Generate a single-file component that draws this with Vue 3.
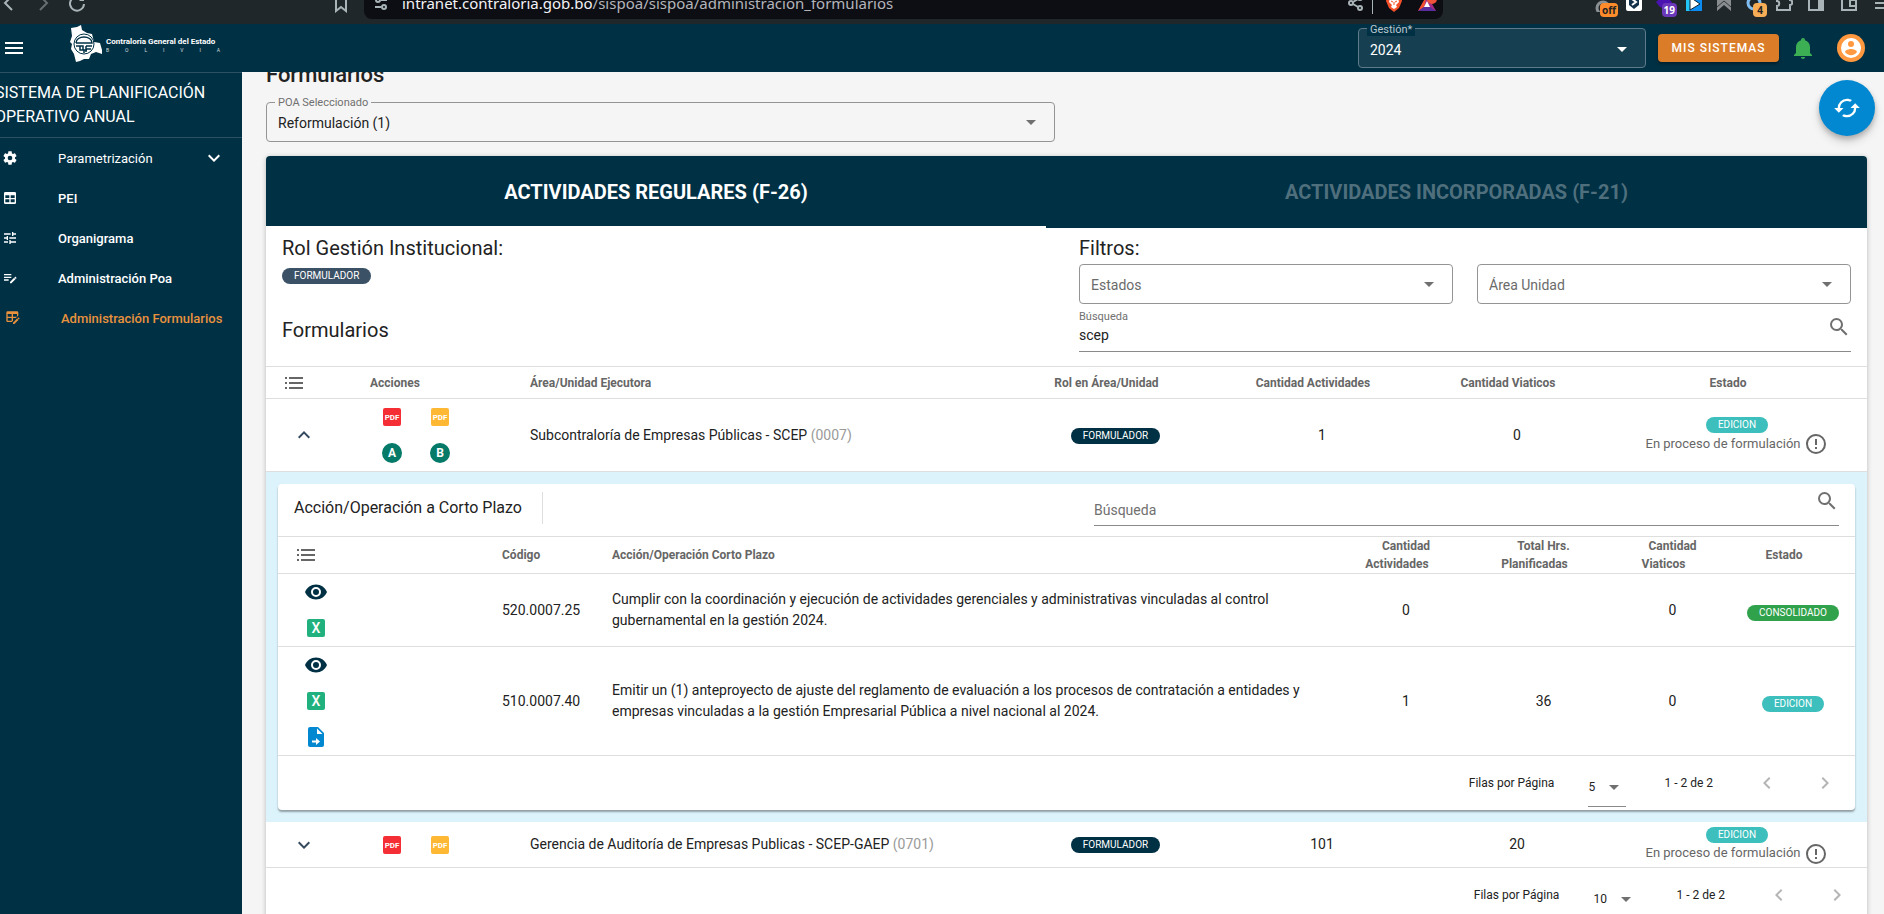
<script setup>
import { ref } from 'vue'

const icons = {
  cog: 'M12,15.5A3.5,3.5 0 0,1 8.5,12A3.5,3.5 0 0,1 12,8.5A3.5,3.5 0 0,1 15.5,12A3.5,3.5 0 0,1 12,15.5M19.43,12.97C19.47,12.65 19.5,12.33 19.5,12C19.5,11.67 19.47,11.34 19.43,11L21.54,9.37C21.73,9.22 21.78,8.95 21.66,8.73L19.66,5.27C19.54,5.05 19.27,4.96 19.05,5.05L16.56,6.05C16.04,5.66 15.5,5.32 14.87,5.07L14.5,2.42C14.46,2.18 14.25,2 14,2H10C9.75,2 9.54,2.18 9.5,2.42L9.13,5.07C8.5,5.32 7.96,5.66 7.44,6.05L4.95,5.05C4.73,4.96 4.46,5.05 4.34,5.27L2.34,8.73C2.21,8.95 2.27,9.22 2.46,9.37L4.57,11C4.53,11.34 4.5,11.67 4.5,12C4.5,12.33 4.53,12.65 4.57,12.97L2.46,14.63C2.27,14.78 2.21,15.05 2.34,15.27L4.34,18.73C4.46,18.95 4.73,19.03 4.95,18.95L7.44,17.94C7.96,18.34 8.5,18.68 9.13,18.93L9.5,21.58C9.54,21.82 9.75,22 10,22H14C14.25,22 14.46,21.82 14.5,21.58L14.87,18.93C15.5,18.67 16.04,18.34 16.56,17.94L19.05,18.95C19.27,19.03 19.54,18.95 19.66,18.73L21.66,15.27C21.78,15.05 21.73,14.78 21.54,14.63L19.43,12.97Z',
  table: 'M5,3H19A2,2 0 0,1 21,5V19A2,2 0 0,1 19,21H5A2,2 0 0,1 3,19V5A2,2 0 0,1 5,3M5,8V12H11V8H5M13,8V12H19V8H13M5,14V18.5H11V14H5M13,14V18.5H19V14H13Z',
  tune: 'M3,17V19H9V17H3M3,5V7H13V5H3M13,21V19H21V17H13V15H11V21H13M7,9V11H3V13H7V15H9V9H7M21,13V11H11V13H21M15,9H17V7H21V5H17V3H15V9Z',
  playlist: 'M3 6V8H14V6H3M3 10V12H14V10H3M20 10.1C19.9 10.1 19.7 10.2 19.6 10.3L18.6 11.3L20.7 13.4L21.7 12.4C21.9 12.2 21.9 11.8 21.7 11.6L20.4 10.3C20.3 10.2 20.2 10.1 20 10.1M18.1 11.8L12 17.9V20H14.1L20.2 13.9L18.1 11.8M3 14V16H10V14H3Z',
  tableEdit: 'M21.7,13.35L20.7,14.35L18.65,12.3L19.65,11.3C19.86,11.08 20.21,11.08 20.42,11.3L21.7,12.58C21.92,12.79 21.92,13.14 21.7,13.35M12,18.94L18.07,12.88L20.12,14.93L14.06,21H12V18.94M4,2H18A2,2 0 0,1 20,4V8.17L16.17,12H12V16.17L10.17,18H4A2,2 0 0,1 2,16V4A2,2 0 0,1 4,2M4,6V10H10V6H4M12,6V10H18V6H12M4,12V16H10V12H4Z',
  down: 'M7.41,8.58L12,13.17L16.59,8.58L18,10L12,16L6,10L7.41,8.58Z',
  up: 'M7.41,15.41L12,10.83L16.59,15.41L18,14L12,8L6,14L7.41,15.41Z',
  left: 'M15.41,16.58L10.83,12L15.41,7.41L14,6L8,12L14,18L15.41,16.58Z',
  right: 'M8.59,16.58L13.17,12L8.59,7.41L10,6L16,12L10,18L8.59,16.58Z',
  eye: 'M12,9A3,3 0 0,0 9,12A3,3 0 0,0 12,15A3,3 0 0,0 15,12A3,3 0 0,0 12,9M12,17A5,5 0 0,1 7,12A5,5 0 0,1 12,7A5,5 0 0,1 17,12A5,5 0 0,1 12,17M12,4.5C7,4.5 2.73,7.61 1,12C2.73,16.39 7,19.5 12,19.5C17,19.5 21.27,16.39 23,12C21.27,7.61 17,4.5 12,4.5Z',
  search: 'M9.5,3A6.5,6.5 0 0,1 16,9.5C16,11.11 15.41,12.59 14.44,13.73L14.71,14H15.5L20.5,19L19,20.5L14,15.5V14.71L13.73,14.44C12.59,15.41 11.11,16 9.5,16A6.5,6.5 0 0,1 3,9.5A6.5,6.5 0 0,1 9.5,3M9.5,5C7,5 5,7 5,9.5C5,12 7,14 9.5,14C12,14 14,12 14,9.5C14,7 12,5 9.5,5Z',
  alert: 'M11,15H13V17H11V15M11,7H13V13H11V7M12,2C6.47,2 2,6.5 2,12A10,10 0 0,0 12,22A10,10 0 0,0 22,12A10,10 0 0,0 12,2M12,20A8,8 0 0,1 4,12A8,8 0 0,1 12,4A8,8 0 0,1 20,12A8,8 0 0,1 12,20Z',
  bell: 'M21,19V20H3V19L5,17V11C5,7.9 7.03,5.17 10,4.29V4A2,2 0 0,1 14,4V4.29C16.97,5.17 19,7.9 19,11V17L21,19M14,21A2,2 0 0,1 10,21Z',
  account: 'M12,19.2C9.5,19.2 7.29,17.92 6,16C6.03,14 10,12.9 12,12.9C14,12.9 17.97,14 18,16C16.71,17.92 14.5,19.2 12,19.2M12,5A3,3 0 0,1 15,8A3,3 0 0,1 12,11A3,3 0 0,1 9,8A3,3 0 0,1 12,5M12,2A10,10 0 0,0 2,12A10,10 0 0,0 12,22A10,10 0 0,0 22,12C22,6.47 17.5,2 12,2Z',
  cached: 'M19,8L15,12H18A6,6 0 0,1 12,18C11,18 10.03,17.75 9.2,17.3L7.74,18.76C8.97,19.54 10.43,20 12,20A8,8 0 0,0 20,12H23M6,12A6,6 0 0,1 12,6C13,6 13.97,6.25 14.8,6.7L16.26,5.24C15.03,4.46 13.57,4 12,4A8,8 0 0,0 4,12H1L5,16L9,12',
  list: 'M3,6H5V8H3V6M7,6H21V8H7V6M3,11H5V13H3V11M7,11H21V13H7V11M3,16H5V18H3V16M7,16H21V18H7V16Z',
  menu: 'M3,6H21V8H3V6M3,11H21V13H3V11M3,16H21V18H3V16Z',
  fileMove: 'M14,2H6A2,2 0 0,0 4,4V20A2,2 0 0,0 6,22H18A2,2 0 0,0 20,20V8L14,2M13,3.5L18.5,9H13V3.5M12,20V17.5H8V15.5H12V13L16,16.5L12,20Z',
}

const nav = [
  { label: 'Parametrización', icon: 'cog', group: true },
  { label: 'PEI', icon: 'table' },
  { label: 'Organigrama', icon: 'tune' },
  { label: 'Administración Poa', icon: 'playlist' },
  { label: 'Administración Formularios', icon: 'tableEdit', active: true },
]

const busqueda = ref('scep')
const busquedaAccion = ref('')

const unidades = [
  { nombre: 'Subcontraloría de Empresas Públicas - SCEP', codigo: '(0007)', actividades: 1, viaticos: 0, abierto: true },
  { nombre: 'Gerencia de Auditoría de Empresas Publicas - SCEP-GAEP', codigo: '(0701)', actividades: 101, viaticos: 20, abierto: false },
]

const acciones = [
  {
    codigo: '520.0007.25',
    texto: 'Cumplir con la coordinación y ejecución de actividades gerenciales y administrativas vinculadas al control gubernamental en la gestión 2024.',
    actividades: '0', horas: '', viaticos: '0', estado: 'CONSOLIDADO', mover: false,
  },
  {
    codigo: '510.0007.40',
    texto: 'Emitir un (1) anteproyecto de ajuste del reglamento de evaluación a los procesos de contratación a entidades y empresas vinculadas a la gestión Empresarial Pública a nivel nacional al 2024.',
    actividades: '1', horas: '36', viaticos: '0', estado: 'EDICION', mover: true,
  },
]
</script>

<template>
  <div class="shell">
    <div class="browser">
      <div class="browser-row">
        <div class="nav-buttons">
          <button type="button" aria-label="Atrás"><svg width="18" height="18" viewBox="0 0 18 18"><path d="M12 2L5 9L12 16" class="line" /></svg></button>
          <button type="button" aria-label="Adelante" class="dim"><svg width="18" height="18" viewBox="0 0 18 18"><path d="M6 2L13 9L6 16" class="line" /></svg></button>
          <button type="button" aria-label="Recargar"><svg width="18" height="18" viewBox="0 0 18 18"><path d="M15 6A7 7 0 1 0 16 10" class="line" /><path d="M16 2V7H11Z" fill="#a9b4b8" /></svg></button>
        </div>
        <button type="button" class="bookmark" aria-label="Marcador"><svg width="14" height="20" viewBox="0 0 14 20"><path d="M2 2H12V18L7 14L2 18Z" class="line" /></svg></button>
        <div class="url">
          <svg width="14" height="18" viewBox="0 0 14 18"><g class="line"><circle cx="4" cy="6" r="2" /><path d="M7 6H13M1 13H7" /><circle cx="10" cy="13" r="2" /></g></svg>
          <span class="address">intranet.contraloria.gob.bo<span>/sispoa/sispoa/administracion_formularios</span></span>
          <svg width="16" height="18" viewBox="0 0 16 18"><g class="line"><circle cx="3" cy="9" r="2" /><circle cx="12" cy="4" r="2" /><circle cx="12" cy="14" r="2" /><path d="M5 8L10 5M5 10L10 13" /></g></svg>
          <i class="url-rule"></i>
          <svg width="18" height="20" viewBox="0 0 18 20"><path d="M9 0L16 3L17 8L14 15L9 19L4 15L1 8L2 3Z" fill="#f4502a" /><path d="M9 5L13 5L14 9L11 12L12 14L9 16L6 14L7 12L4 9L5 5Z" fill="#fff" /><path d="M6 8L8 9M12 8L10 9M9 9V12" stroke="#f4502a" /></svg>
          <svg class="bat" width="22" height="20" viewBox="0 0 22 20"><path d="M11 2L20 18H2Z" fill="#a12b86" /><path d="M11 2L2 18L8 14Z" fill="#f4502a" /><path d="M2 18H20L14 14H8Z" fill="#5a2d9c" /><path d="M11 8L14 14H8Z" fill="#fff" /><circle cx="16" cy="6" r="5" fill="#f0533a" /></svg>
        </div>
        <div class="extensions">
          <button type="button" aria-label="Extensión desactivada"><svg width="18" height="18" viewBox="0 0 18 18"><circle cx="8" cy="14" r="6" fill="none" stroke="#8b9093" stroke-width="3" /></svg><b class="badge off">off</b></button>
          <button type="button" aria-label="Escudo"><svg width="18" height="18" viewBox="0 0 18 18"><rect x="1" y="1" width="16" height="16" rx="2" fill="#fff" /><path d="M4 3H14V11L9 15L4 11Z" fill="#12304a" /><path d="M7 5L11 8L7 11" fill="none" stroke="#fff" stroke-width="2" /></svg></button>
          <button type="button" aria-label="Extensión con 19 avisos"><svg width="18" height="18" viewBox="0 0 18 18"><path d="M9 1L17 8L13 16L5 13L1 8Z" fill="#4a12b0" /></svg><b class="badge violet">19</b></button>
          <button type="button" aria-label="Reproductor"><svg width="18" height="18" viewBox="0 0 18 18"><rect x="1" y="1" width="16" height="16" fill="#0a8cf0" /><path d="M1 1H8L4 17H1Z" fill="#22c3f5" /><path d="M5 3L15 10L5 16Z" fill="#fff" stroke="#10202c" /></svg></button>
          <button type="button" aria-label="Notas"><svg width="18" height="18" viewBox="0 0 18 18"><path d="M2 2H16V17L9 11L2 17Z" fill="#8a8d8f" /><path d="M2 13L9 7L16 13" fill="none" stroke="#30373a" stroke-width="1" /></svg></button>
          <button type="button" aria-label="Extensión con 4 avisos"><svg width="18" height="18" viewBox="0 0 18 18"><circle cx="9" cy="9" r="6" fill="none" stroke="#7fbdf0" stroke-width="3" /></svg><b class="badge sand">4</b></button>
          <button type="button" aria-label="Extensiones"><svg width="18" height="18" viewBox="0 0 18 18"><path d="M2 2H15V6C18 6 18 11 15 11V16H2V12C5 12 5 7 2 7Z" class="line" /></svg></button>
          <button type="button" class="wide" aria-label="Panel lateral"><svg width="18" height="18" viewBox="0 0 18 18"><path d="M2 1H16V16H2Z" class="line" /><path d="M11 1H16V16H11Z" fill="#a9b4b8" /></svg></button>
          <button type="button" class="wide" aria-label="Cartera"><svg width="18" height="18" viewBox="0 0 18 18"><path d="M16 6V2H2V16H16V12M16 6H10V12H16Z" class="line" /></svg></button>
          <button type="button" class="wide" aria-label="Menú del navegador"><svg width="18" height="18" viewBox="0 0 18 18"><path d="M2 4H16M2 9H16M2 14H16" class="line" /></svg></button>
        </div>
      </div>
    </div>

    <header class="topbar">
      <button type="button" class="icon-btn" aria-label="Menú"><svg class="i24" viewBox="0 0 24 24"><path :d="icons.menu" /></svg></button>
      <a href="#" class="brand">
        <svg width="34" height="38" viewBox="0 0 34 38">
          <path d="M2 3L8 2L12 0L13 5L18 8L23 9L25 17L31 18L33 25L33 29L27 27L22 29L20 34L15 34L11 36L7 37L5 29L2 24L3 19L1 17L3 11Z" fill="#fff" />
          <circle cx="15" cy="19" r="10" fill="#fff" stroke="#003044" stroke-width="1" />
          <path d="M7 18C7 14 11 12 15 12C19 12 23 14 23 18H7M7 21H14V25H18M11 21V25H15V28M17 21H23M17 21V27M17 24H22" fill="none" stroke="#003044" stroke-width="1.5" />
        </svg>
        <span class="brand-text">
          <strong>Contraloría General del Estado</strong>
          <span class="brand-sub"><i v-for="(l, k) in 'BOLIVIA'.split('')" :key="k">{{ l }}</i></span>
        </span>
      </a>
      <div class="field dark gestion">
        <label for="gestion">Gestión*</label>
        <select id="gestion"><option>2024</option></select>
        <svg class="i24 arrow" viewBox="0 0 24 24"><path d="M7,10L12,15L17,10H7Z" /></svg>
      </div>
      <button type="button" class="systems">MIS SISTEMAS</button>
      <button type="button" class="icon-btn bell" aria-label="Notificaciones"><svg class="i24" viewBox="0 0 24 24"><path :d="icons.bell" /></svg></button>
      <button type="button" class="avatar" aria-label="Cuenta"><svg class="i24" viewBox="0 0 24 24"><path :d="icons.account" /></svg></button>
    </header>

    <div class="body">
      <aside class="sidebar">
        <div class="system-name">SISTEMA DE PLANIFICACIÓN OPERATIVO ANUAL</div>
        <nav>
          <a v-for="n in nav" :key="n.label" href="#" :class="{ active: n.active, group: n.group }">
            <svg class="i16" viewBox="0 0 24 24"><path :d="icons[n.icon]" fill-rule="evenodd" /></svg>
            <span>{{ n.label }}</span>
            <svg v-if="n.group" class="i24" viewBox="0 0 24 24"><path :d="icons.down" /></svg>
          </a>
        </nav>
      </aside>

      <main class="main">
        <h1>Formularios</h1>
        <div class="field poa">
          <label for="poa">POA Seleccionado</label>
          <select id="poa"><option>Reformulación (1)</option></select>
          <svg class="i24 arrow" viewBox="0 0 24 24"><path d="M7,10L12,15L17,10H7Z" /></svg>
        </div>

        <section class="card">
          <div class="tabs" role="tablist">
            <button type="button" role="tab" aria-selected="true" class="tab on">ACTIVIDADES REGULARES (F-26)</button>
            <button type="button" role="tab" aria-selected="false" class="tab">ACTIVIDADES INCORPORADAS (F-21)</button>
          </div>

          <div class="intro">
            <div class="role">
              <h2>Rol Gestión Institucional:</h2>
              <span class="chip slate">FORMULADOR</span>
              <h2 class="forms-title">Formularios</h2>
            </div>
            <div class="filters">
              <h2>Filtros:</h2>
              <div class="filter-row">
                <div class="field">
                  <select aria-label="Estados" class="muted"><option>Estados</option></select>
                  <svg class="i24 arrow" viewBox="0 0 24 24"><path d="M7,10L12,15L17,10H7Z" /></svg>
                </div>
                <div class="field">
                  <select aria-label="Área Unidad" class="muted"><option>Área Unidad</option></select>
                  <svg class="i24 arrow" viewBox="0 0 24 24"><path d="M7,10L12,15L17,10H7Z" /></svg>
                </div>
              </div>
              <div class="search">
                <div class="search-text">
                  <label for="busqueda">Búsqueda</label>
                  <input id="busqueda" v-model="busqueda" type="text" />
                </div>
                <svg class="i24" viewBox="0 0 24 24"><path :d="icons.search" /></svg>
              </div>
            </div>
          </div>

          <table class="outer">
            <colgroup>
              <col class="o-exp" /><col class="o-act" /><col /><col class="o-rol" /><col class="o-can" /><col class="o-via" /><col class="o-est" />
            </colgroup>
            <thead>
              <tr>
                <th class="l"><svg class="i24 list" viewBox="0 0 24 24"><path :d="icons.list" /></svg></th>
                <th class="l">Acciones</th>
                <th class="l">Área/Unidad Ejecutora</th>
                <th>Rol en Área/Unidad<i class="sort"></i></th>
                <th>Cantidad Actividades<i class="sort"></i></th>
                <th>Cantidad Viaticos<i class="sort"></i></th>
                <th>Estado<i class="sort"></i></th>
              </tr>
            </thead>
            <tbody>
              <template v-for="u in unidades" :key="u.codigo">
                <tr>
                  <td class="l">
                    <button type="button" class="act navy" :aria-label="u.abierto ? 'Contraer' : 'Expandir'"><svg class="i24" viewBox="0 0 24 24"><path :d="u.abierto ? icons.up : icons.down" /></svg></button>
                  </td>
                  <td class="l pair-cell">
                    <div class="pair">
                      <button type="button" class="act" aria-label="PDF rojo"><svg class="i24" viewBox="0 0 24 24"><rect x="3" y="3" width="18" height="18" rx="2" fill="#f52d35" /><text x="12" y="15" class="pdf">PDF</text></svg></button>
                      <button type="button" class="act" aria-label="PDF amarillo"><svg class="i24" viewBox="0 0 24 24"><rect x="3" y="3" width="18" height="18" rx="2" fill="#ffb833" /><text x="12" y="15" class="pdf">PDF</text></svg></button>
                      <template v-if="u.abierto">
                        <button type="button" class="act"><svg class="i24" viewBox="0 0 24 24"><circle cx="12" cy="12" r="10" fill="#057a69" /><text x="12" y="16" class="letter">A</text></svg></button>
                        <button type="button" class="act"><svg class="i24" viewBox="0 0 24 24"><circle cx="12" cy="12" r="10" fill="#057a69" /><text x="12" y="16" class="letter">B</text></svg></button>
                      </template>
                    </div>
                  </td>
                  <td class="l">{{ u.nombre }} <span class="code">{{ u.codigo }}</span></td>
                  <td><span class="chip navy-chip">FORMULADOR</span></td>
                  <td>{{ u.actividades }}</td>
                  <td>{{ u.viaticos }}</td>
                  <td>
                    <div class="state">
                      <span class="chip teal">EDICION</span>
                      <div class="state-note"><span>En proceso de formulación</span><svg class="i24" viewBox="0 0 24 24"><path :d="icons.alert" /></svg></div>
                    </div>
                  </td>
                </tr>
                <tr v-if="u.abierto" class="expanded">
                  <td colspan="7">
                    <div class="inner-card">
                      <div class="inner-bar">
                        <h3>Acción/Operación a Corto Plazo</h3>
                        <div class="search slim">
                          <input v-model="busquedaAccion" type="text" placeholder="Búsqueda" aria-label="Búsqueda de acción" />
                          <svg class="i24" viewBox="0 0 24 24"><path :d="icons.search" /></svg>
                        </div>
                      </div>
                      <table class="inner">
                        <colgroup>
                          <col class="n-act" /><col class="n-cod" /><col /><col class="n-can" /><col class="n-hrs" /><col class="n-via" /><col class="n-est" />
                        </colgroup>
                        <thead>
                          <tr>
                            <th class="l"><svg class="i24 list" viewBox="0 0 24 24"><path :d="icons.list" /></svg></th>
                            <th class="l">Código</th>
                            <th class="l">Acción/Operación Corto Plazo</th>
                            <th>Cantidad<br />Actividades<i class="sort"></i></th>
                            <th>Total Hrs.<br />Planificadas<i class="sort"></i></th>
                            <th>Cantidad<br />Viaticos<i class="sort"></i></th>
                            <th>Estado<i class="sort"></i></th>
                          </tr>
                        </thead>
                        <tbody>
                          <tr v-for="a in acciones" :key="a.codigo">
                            <td class="l">
                              <div class="stack">
                                <button type="button" class="act deep" aria-label="Ver"><svg class="i24" viewBox="0 0 24 24"><path :d="icons.eye" /></svg></button>
                                <button type="button" class="act"><svg class="i24" viewBox="0 0 24 24"><rect x="3" y="3" width="18" height="18" rx="2" fill="#21b17f" /><text x="12" y="17" class="excel">X</text></svg></button>
                                <button v-if="a.mover" type="button" class="act blue" aria-label="Mover"><svg class="i20" viewBox="2 2 20 20"><path :d="icons.fileMove" fill-rule="evenodd" /></svg></button>
                              </div>
                            </td>
                            <td class="l">{{ a.codigo }}</td>
                            <td class="l desc">{{ a.texto }}</td>
                            <td>{{ a.actividades }}</td>
                            <td>{{ a.horas }}</td>
                            <td>{{ a.viaticos }}</td>
                            <td class="chip-cell"><span class="chip" :class="a.estado === 'EDICION' ? 'teal' : 'green'">{{ a.estado }}</span></td>
                          </tr>
                        </tbody>
                      </table>
                      <div class="pager inner-pager">
                        <label for="filas-accion">Filas por Página</label>
                        <span class="rows"><select id="filas-accion"><option>5</option></select><svg class="i24" viewBox="0 0 24 24"><path d="M7,10L12,15L17,10H7Z" /></svg></span>
                        <span class="range">1 - 2 de 2</span>
                        <button type="button" disabled aria-label="Página anterior"><svg class="i24" viewBox="0 0 24 24"><path :d="icons.left" /></svg></button>
                        <button type="button" disabled aria-label="Página siguiente"><svg class="i24" viewBox="0 0 24 24"><path :d="icons.right" /></svg></button>
                      </div>
                    </div>
                  </td>
                </tr>
              </template>
            </tbody>
          </table>
          <div class="pager">
            <label for="filas">Filas por Página</label>
            <span class="rows ten"><select id="filas"><option>10</option></select><svg class="i24" viewBox="0 0 24 24"><path d="M7,10L12,15L17,10H7Z" /></svg></span>
            <span class="range">1 - 2 de 2</span>
            <button type="button" disabled aria-label="Página anterior"><svg class="i24" viewBox="0 0 24 24"><path :d="icons.left" /></svg></button>
            <button type="button" disabled aria-label="Página siguiente"><svg class="i24" viewBox="0 0 24 24"><path :d="icons.right" /></svg></button>
          </div>
        </section>
        <button type="button" class="fab" aria-label="Actualizar"><svg viewBox="0 0 24 24"><path :d="icons.cached" /></svg></button>
      </main>
    </div>
  </div>
</template>

<style>
body { margin: 0; overflow: hidden; }
</style>

<style scoped>
* { box-sizing: border-box; }
.shell { height: 100vh; display: flex; flex-direction: column; overflow: hidden; font-family: Roboto, "Liberation Sans", sans-serif; font-size: 14px; color: #222; background: #f5f5f5; }
button { font: inherit; color: inherit; background: none; border: 0; padding: 0; display: inline-flex; align-items: center; justify-content: center; }
select, input { font: inherit; color: inherit; background: none; border: 0; padding: 0; margin: 0; outline: 0; appearance: none; min-width: 0; opacity: 1; }
a { color: inherit; text-decoration: none; }
h1, h2, h3 { margin: 0; font-weight: 400; }
svg { fill: currentColor; display: block; flex: none; }
.i16 { width: 16px; height: 16px; }
.i20 { width: 20px; height: 20px; }
.i24 { width: 24px; height: 24px; }

.browser { height: 24px; flex: none; overflow: hidden; background: #20272a; color: #a9b4b8; }
.browser-row { height: 32px; margin-top: -13px; display: flex; align-items: center; }
.line { fill: none; stroke: #a9b4b8; stroke-width: 2; }
.nav-buttons { display: flex; gap: 16px; width: 332px; }
.nav-buttons .dim { opacity: .5; }
.bookmark { width: 18px; }
.url { flex: 1; height: 32px; margin: 0 146px 0 14px; padding: 0 5px 0 10px; display: flex; align-items: center; background: #0d0e14; border-radius: 8px; }
.address { flex: 1; margin-left: 14px; font-family: "Noto Sans", sans-serif; font-size: 15px; color: #f2f2f4; white-space: nowrap; }
.address span { color: #b4b5ba; }
.url-rule { width: 1px; height: 22px; margin: 0 12px 0 8px; background: #a9b4b8; }
.bat { margin-left: 13px; }
.extensions { display: flex; width: 295px; overflow: hidden; }
.extensions button { position: relative; flex: none; width: 30px; height: 32px; }
.extensions .wide { width: 33px; }
.badge { position: absolute; right: 2px; bottom: 2px; min-width: 14px; height: 14px; padding: 0 2px; border-radius: 4px; font: bold 10px/14px "Noto Sans", sans-serif; text-align: center; color: #222; }
.off { right: 1px; background: #ff8c2b; }
.violet { background: #6a38b8; color: #fff; }
.sand { background: #f6ad55; }

.topbar { height: 48px; flex: none; display: flex; align-items: center; background: #003044; color: #fff; padding: 0 19px 0 2px; }
.icon-btn { width: 24px; height: 24px; }
.brand { display: flex; align-items: center; margin-left: 43px; margin-top: -8px; }
.brand-text { display: flex; flex-direction: column; margin-left: 3px; width: 114px; }
.brand-text strong { font: bold 8px/12px Roboto, sans-serif; white-space: nowrap; }
.brand-sub { display: flex; justify-content: space-between; font-size: 5px; line-height: 4px; opacity: .8; }
.brand-sub i { font-style: normal; }
.gestion { width: 288px; margin-left: auto; }
.systems { width: 121px; height: 28px; margin-left: 12px; border-radius: 4px; background: #db7d28; font-size: 12px; font-weight: 500; letter-spacing: 1px; box-shadow: 0 2px 3px rgba(0, 0, 0, .35); }
.bell { margin-left: 12px; color: #3cae54; }
.avatar { width: 28px; height: 28px; margin-left: 22px; border-radius: 50%; background: #ff983f; }

.field { position: relative; height: 40px; border: 1px solid #949494; border-radius: 4px; display: flex; align-items: center; }
.field label { position: absolute; left: 8px; top: -7px; padding: 0 3px; font-size: 11px; line-height: 14px; color: #707070; background: #f5f5f5; }
.field select { flex: 1; height: 38px; padding: 1px 12px 0 11px; font-size: 14px; }
.field .muted { color: #6b6b6b; }
.field .arrow { position: absolute; right: 11px; top: 7px; color: #707070; pointer-events: none; }
.field.dark { border-color: #5d7a88; background: #173f52; }
.field.dark select { padding-top: 3px; }
.field.dark label { background: #003044; color: #b9c7ce; top: -5px; line-height: 12px; }
.field.dark .arrow { color: #fff; top: 8px; }

.body { flex: 1; min-height: 0; display: flex; }
.sidebar { width: 242px; flex: none; background: #003044; color: #fff; border-top: 1px solid #2d5164; overflow: hidden; }
.system-name { margin-left: -5px; padding: 8px 16px 8px 0; font-size: 16px; line-height: 24px; border-bottom: 1px solid #2d5164; }
.sidebar nav a { height: 40px; padding: 0 16px 0 2px; display: flex; align-items: center; font-size: 13px; font-weight: 500; }
.sidebar nav span { flex: 1; margin-left: 40px; white-space: nowrap; }
.sidebar nav .group { font-weight: 400; }
.sidebar nav .active { padding-left: 5px; padding-right: 0; color: #e9923e; }

.main { position: relative; flex: 1; min-width: 0; overflow: hidden; padding: 0 17px 0 24px; }
h1 { margin-top: -9px; font-size: 22px; line-height: 24px; font-weight: 500; }
.poa { width: 789px; margin-top: 15px; }
.fab { position: absolute; right: 9px; top: 8px; width: 56px; height: 56px; border-radius: 50%; background: #0288d1; color: #fff; box-shadow: 0 3px 5px rgba(0, 0, 0, .2), 0 6px 10px rgba(0, 0, 0, .14); }
.fab svg { width: 28px; height: 28px; }

.card { margin-top: 14px; border-radius: 4px; background: #fff; overflow: hidden; box-shadow: 0 1px 5px rgba(0, 0, 0, .25); }
.tabs { display: flex; height: 72px; background: #003044; }
.tab { flex: 821; font-size: 20px; font-weight: 700; color: #4f6f7d; }
.tab.on { flex: 780; color: #fff; border-bottom: 2px solid #fff; padding-top: 2px; }

.intro { display: flex; padding: 8px 16px 0; }
.role { flex: 797; }
.filters { flex: 772; }
h2 { font-size: 20px; line-height: 24px; }
.role .chip { margin-top: 8px; display: flex; width: max-content; }
.forms-title { margin-top: 34px; }
.filter-row { display: grid; grid-template-columns: 1fr 1fr; gap: 24px; margin-top: 4px; }
.search { display: flex; border-bottom: 1px solid #8a8a8a; color: #707070; height: 43px; margin: 5px 0 14px; }
.search-text { flex: 1; display: flex; flex-direction: column; }
.search label { font-size: 11px; line-height: 15px; }
.search input { height: 22px; font-size: 14px; color: #222; }
.search .i24 { margin-top: 6px; }
.chip { display: inline-flex; align-items: center; height: 16px; padding: 0 12px; border-radius: 8px; font-size: 10px; line-height: 16px; color: #fff; white-space: nowrap; vertical-align: middle; }
.slate { background: #3a5166; }
.navy-chip { background: #003044; }
.teal { background: #3cbfbd; }
.green { background: #31a24c; }

table { width: 100%; table-layout: fixed; border-collapse: separate; border-spacing: 0; }
th { font-size: 12px; line-height: 18px; font-weight: 700; color: #666; padding: 0 16px; border-top: 1px solid #dedede; border-bottom: 1px solid #dedede; }
td { padding: 0 16px; text-align: center; border-bottom: 1px solid #dedede; font-size: 14px; line-height: 21px; }
.l { text-align: left; }
.sort { display: inline-block; width: 18px; }
.list { color: #666; }
.o-exp { width: 88px; } .o-act { width: 160px; } .o-rol { width: 203px; } .o-can { width: 210px; } .o-via { width: 180px; } .o-est { width: 260px; }
.outer > thead th { height: 33px; }
.outer > tbody > tr { height: 46px; }
.act { width: 44px; height: 36px; vertical-align: middle; }
.navy { color: #34495e; }
.deep { color: #003044; }
.blue { color: #0288d1; }
td.pair-cell { padding: 0 14px; }
.pair { display: grid; grid-template-columns: 48px 48px; justify-items: center; }
.pdf, .letter, .excel { fill: #fff; font-weight: 700; font-size: 8px; text-anchor: middle; }
.letter { font-size: 12px; }
.excel { font-size: 14px; font-weight: 500; }
.code { color: #9a9a9a; }
.state { display: flex; flex-direction: column; align-items: center; }
.state-note { display: flex; align-items: center; gap: 4px; height: 20px; color: #666; }
.state-note span { white-space: nowrap; font-size: 13px; }
.state-note .i24 { margin-top: 2px; }

.expanded > td { padding: 12px; background: #dcf3fc; border: 0; }
.inner-card { background: #fff; border-radius: 4px; box-shadow: 0 2px 2px rgba(0, 0, 0, .35); }
.inner-bar { height: 52px; display: grid; grid-template-columns: 800fr 745fr; align-items: start; justify-items: start; padding: 8px 16px 0; }
h3 { font-size: 16px; line-height: 32px; padding-right: 20px; border-right: 1px solid #dedede; }
.slim { width: 100%; height: 34px; margin: 0; }
.slim input { flex: 1; margin-top: 7px; }
.slim input::placeholder { color: #707070; opacity: 1; }
.slim .i24 { margin-top: -3px; }
.n-act { width: 208px; } .n-cod { width: 110px; } .n-can { width: 134px; } .n-hrs { width: 141px; } .n-via { width: 117px; } .n-est { width: 124px; }
.inner th { text-align: center; }
.inner th.l { text-align: left; }
.stack { display: flex; flex-direction: column; }
td.chip-cell { padding: 5px 0 0; }

.pager { height: 53px; display: flex; align-items: center; justify-content: flex-end; padding-right: 6px; font-size: 12px; }
.inner-pager { height: 54px; }
.rows { display: flex; align-items: center; width: 38px; height: 38px; margin: 9px 38px 0 34px; border-bottom: 1px solid #8a8a8a; color: #222; }
.rows select { flex: 1; height: 32px; padding-top: 1px; }
.rows .i24 { color: #707070; }
.ten { width: 45px; }
.range { margin-right: 30px; }
.pager button { width: 48px; height: 36px; margin-left: 10px; color: #b5b5b5; }
.pager button:first-of-type { margin-left: 0; }
</style>
